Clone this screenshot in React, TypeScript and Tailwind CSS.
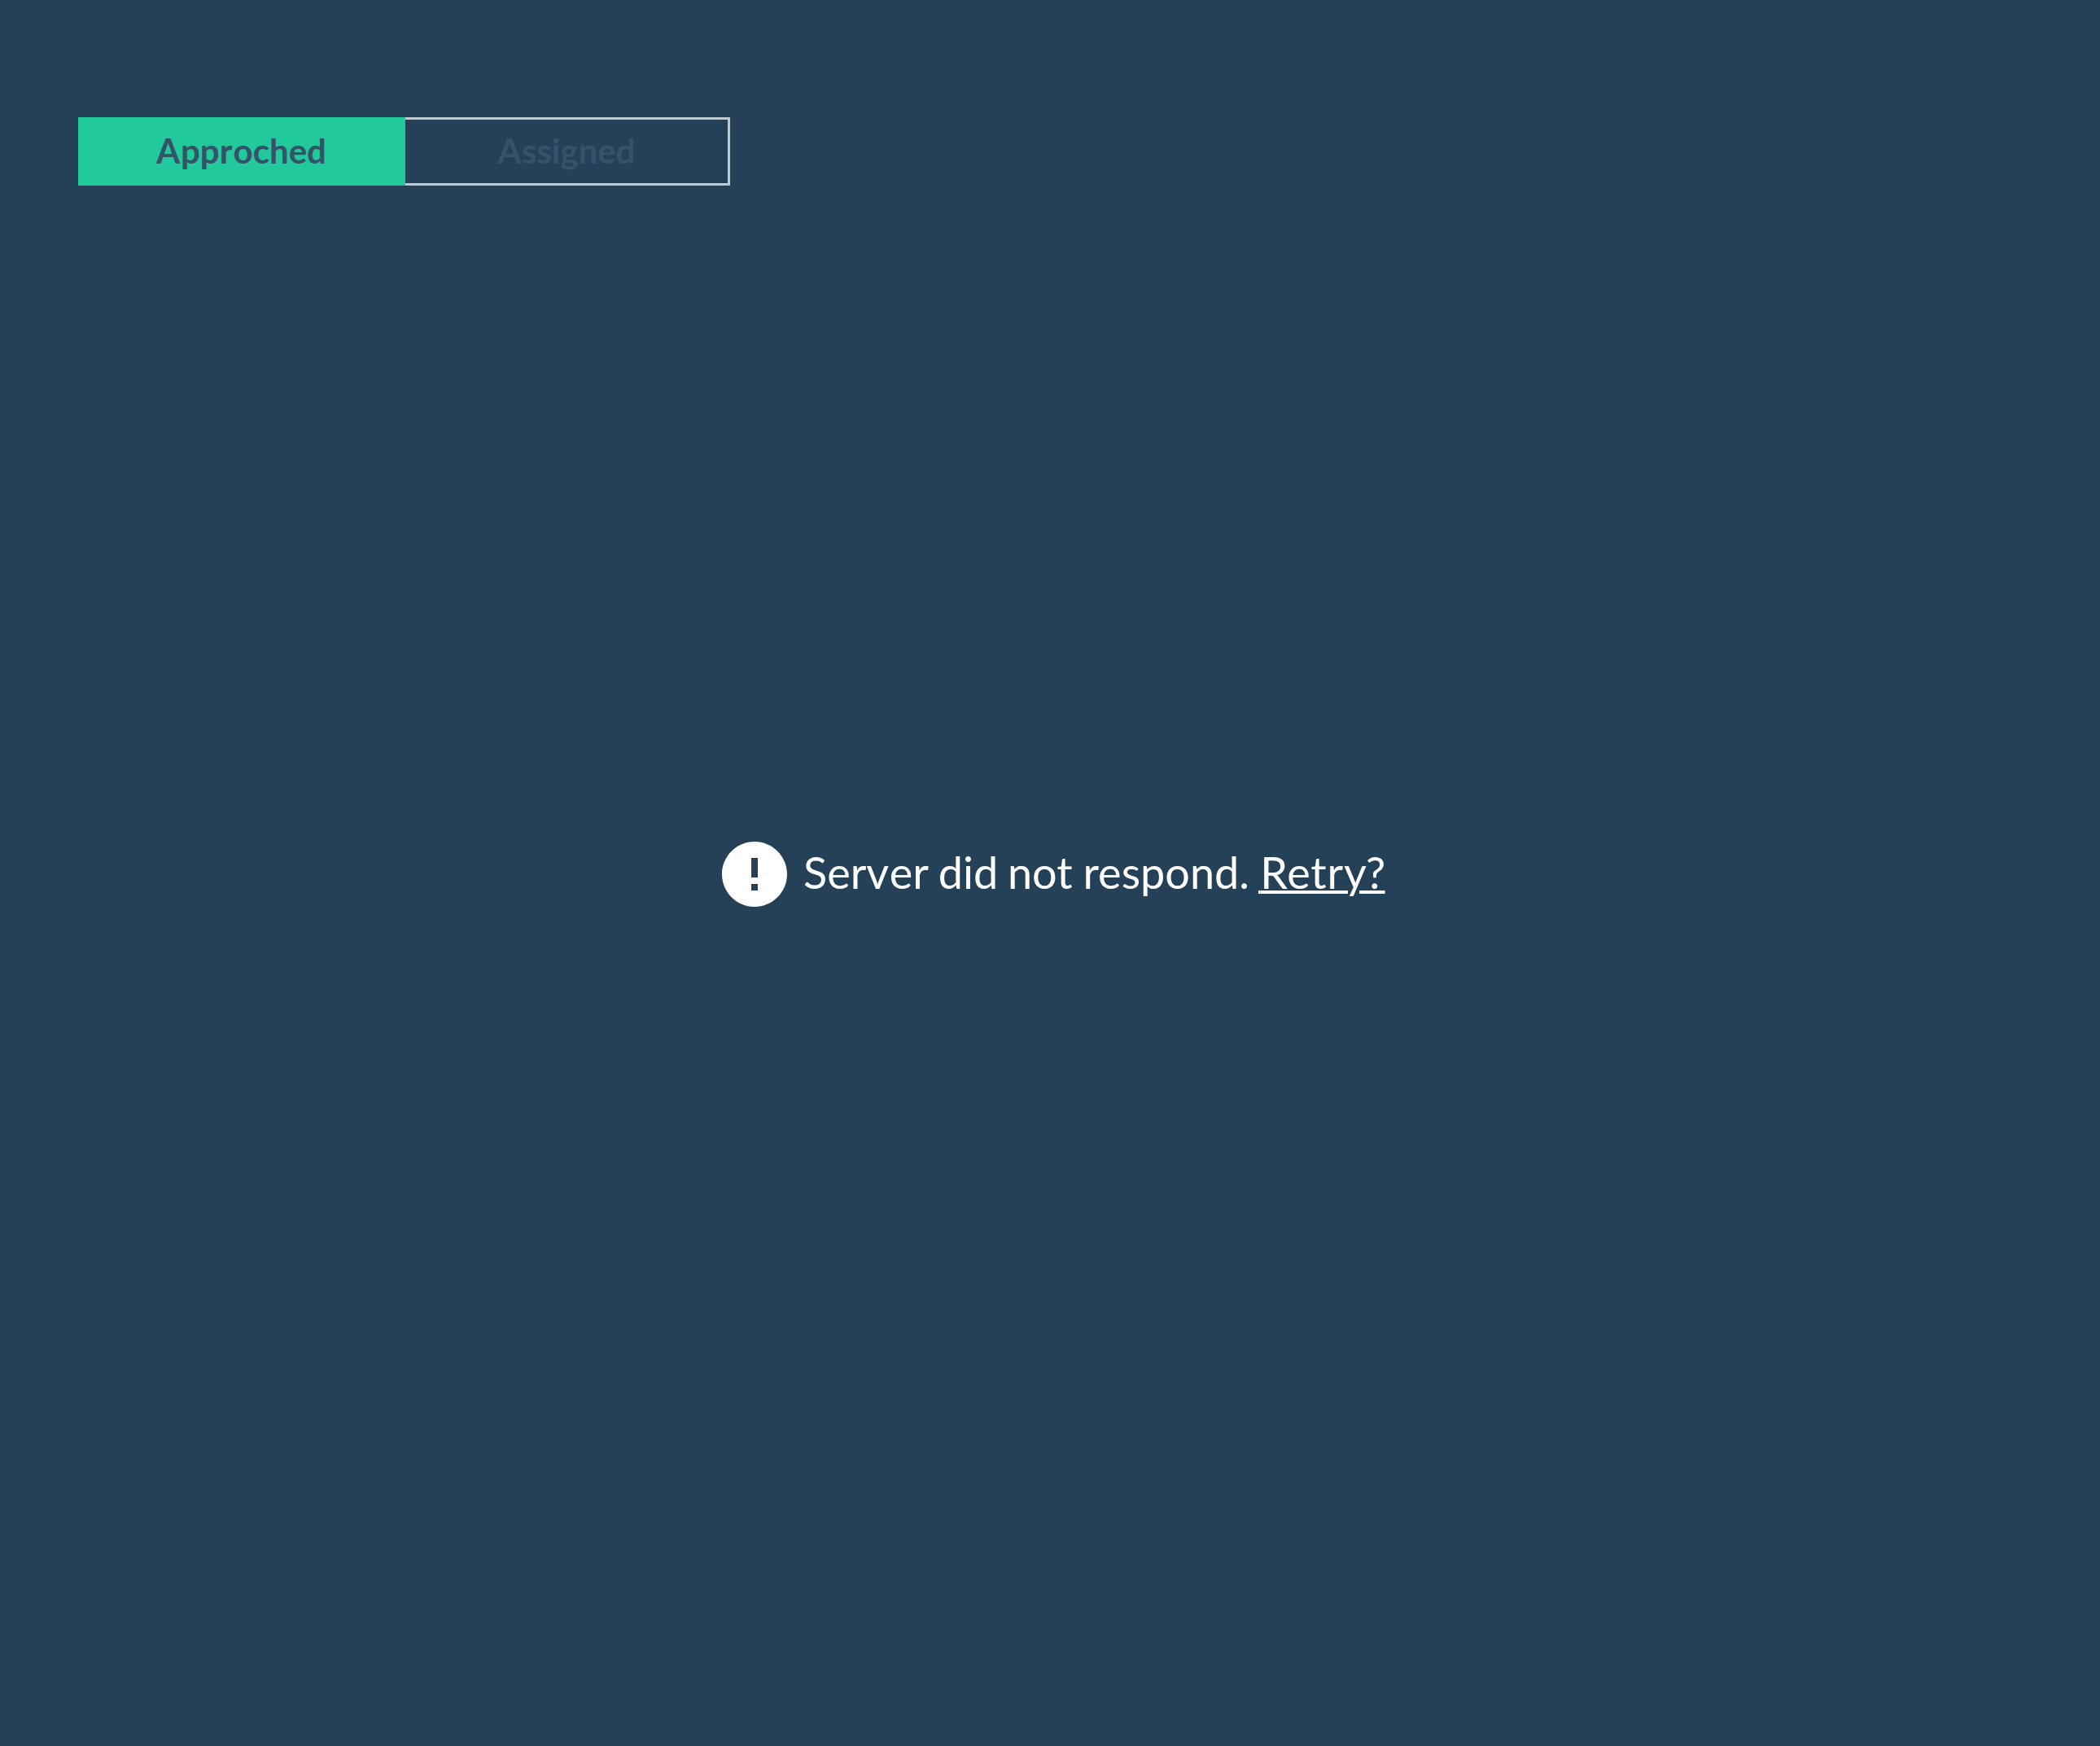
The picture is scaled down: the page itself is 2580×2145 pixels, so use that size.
import { MdError } from "react-icons/md";

export default function App() {
  return (
    <main className="flex h-[2145px] w-full flex-col bg-[#254157] px-24 pt-36 font-['Lato',sans-serif]">
      <div className="flex h-[84px] w-[801px] shrink-0 text-[42px] font-bold leading-[50px] text-[#34536a]">
        <button className="flex h-full w-[402px] items-center justify-center bg-[#22c99a] pb-[2px] pr-[1px]">
          <span>
            <span className="tracking-[0.7px]">A</span>pp<span className="tracking-[1.3px]">r</span>oched
          </span>
        </button>
        <button className="flex h-full w-[399px] items-center justify-center border-[3px] border-l-0 border-[#bdcad3] pb-[2px]">
          Assigned
        </button>
      </div>
      <div className="mt-[798px] flex h-24 items-center pl-[783px] text-[54px] leading-[65px] text-white">
        <MdError className="size-24 shrink-0" />
        <p className="ml-[12px] whitespace-pre pb-[6px] [word-spacing:-0.8px]">
          Ser<span className="tracking-[0.5px]">v</span>er did<span className="tracking-[-1.3px]"> </span>not respond.
          <a className="ml-[11px] underline decoration-[4px] underline-offset-[2px]">
            <span className="tracking-[-10.7px]"> </span>
            <span className="tracking-[0.8px]">Retr</span>
            <span className="tracking-[-0.7px]">y?</span>
          </a>
        </p>
      </div>
    </main>
  );
}
